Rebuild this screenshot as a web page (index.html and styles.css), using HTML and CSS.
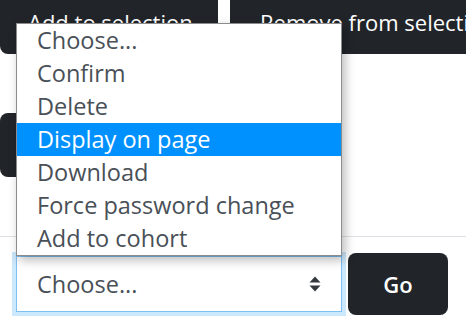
FILE: index.html
```html
<!DOCTYPE html>
<html lang="en">
<head>
    <meta charset="UTF-8">
    <meta name="viewport" content="width=device-width, initial-scale=1.0">
    <title>Bulk user actions</title>
    <link rel="stylesheet" href="styles.css">
</head>
<body>
    <div class="page">
        <div class="toolbar">
            <button class="btn-dark btn-add">Add to selection</button>
            <button class="btn-dark btn-remove">Remove from selection</button>
        </div>

        <div class="toolbar toolbar-second">
            <button class="btn-dark btn-all">Add all</button>
        </div>

        <hr class="divider">

        <div class="action-row">
            <div class="select-field">
                <span class="select-value">Choose...</span>
                <svg class="select-arrows" width="12" height="16" viewBox="0 0 12 16">
                    <path d="M6 0.5 L11.5 6.5 H0.5 Z" fill="#343a40"/>
                    <path d="M6 15.5 L11.5 9.5 H0.5 Z" fill="#343a40"/>
                </svg>
            </div>
            <button class="btn-dark btn-go">Go</button>
        </div>

        <ul class="dropdown-list">
            <li class="dropdown-item">Choose...</li>
            <li class="dropdown-item">Confirm</li>
            <li class="dropdown-item">Delete</li>
            <li class="dropdown-item is-active">Display on page</li>
            <li class="dropdown-item">Download</li>
            <li class="dropdown-item">Force password change</li>
            <li class="dropdown-item">Add to cohort</li>
        </ul>
    </div>
</body>
</html>
```

FILE: styles.css
```css
:root {
    --dark: #212529;
    --text: #495057;
    --border-light: #dee2e6;
    --highlight: #0091ff;
    --focus: #7fc0f2;
}

* {
    margin: 0;
    padding: 0;
    box-sizing: border-box;
    font-family: 'Open Sans', 'Noto Sans', sans-serif;
}

body {
    background: #ffffff;
    overflow: hidden;
}

.page {
    position: relative;
    display: flow-root;
    width: 466px;
    height: 328px;
}

.toolbar {
    display: flex;
    gap: 12px;
    margin-top: -10px;
}

.toolbar-second {
    margin-top: 59px;
}

.btn-dark {
    flex-shrink: 0;
    background-color: var(--dark);
    color: #ffffff;
    border: none;
    border-radius: 8px;
    height: 64px;
    padding: 0 28px;
    font-size: 22px;
    white-space: nowrap;
}

.btn-add {
    width: 218px;
}

.btn-remove {
    padding-left: 30px;
}

.btn-all {
    width: 220px;
}

.divider {
    border: none;
    border-top: 1px solid var(--border-light);
    margin-top: 59px;
}

.action-row {
    display: flex;
    align-items: center;
    gap: 6px;
    padding-left: 16px;
    margin-top: 16px;
}

.select-field {
    width: 326px;
    height: 56px;
    display: flex;
    align-items: center;
    justify-content: space-between;
    padding: 0 20px 0 20px;
    border: 1px solid var(--focus);
    box-shadow: 0 0 0 4px rgba(0, 140, 240, 0.2);
    color: var(--text);
    font-size: 23.5px;
}

.btn-go {
    width: 100px;
    height: 62px;
    padding: 0;
    font-size: 22px;
    font-weight: 600;
}

.dropdown-list {
    position: absolute;
    left: 16px;
    top: 23px;
    width: 326px;
    list-style: none;
    background: #ffffff;
    border: 1px solid #8c8c8c;
    box-shadow: 3px 4px 10px rgba(0, 0, 0, 0.28);
}

.dropdown-item {
    height: 33px;
    line-height: 33px;
    padding-left: 20px;
    color: var(--text);
    font-size: 23.5px;
    white-space: nowrap;
}

.dropdown-item.is-active {
    background-color: var(--highlight);
    color: #ffffff;
}
```
